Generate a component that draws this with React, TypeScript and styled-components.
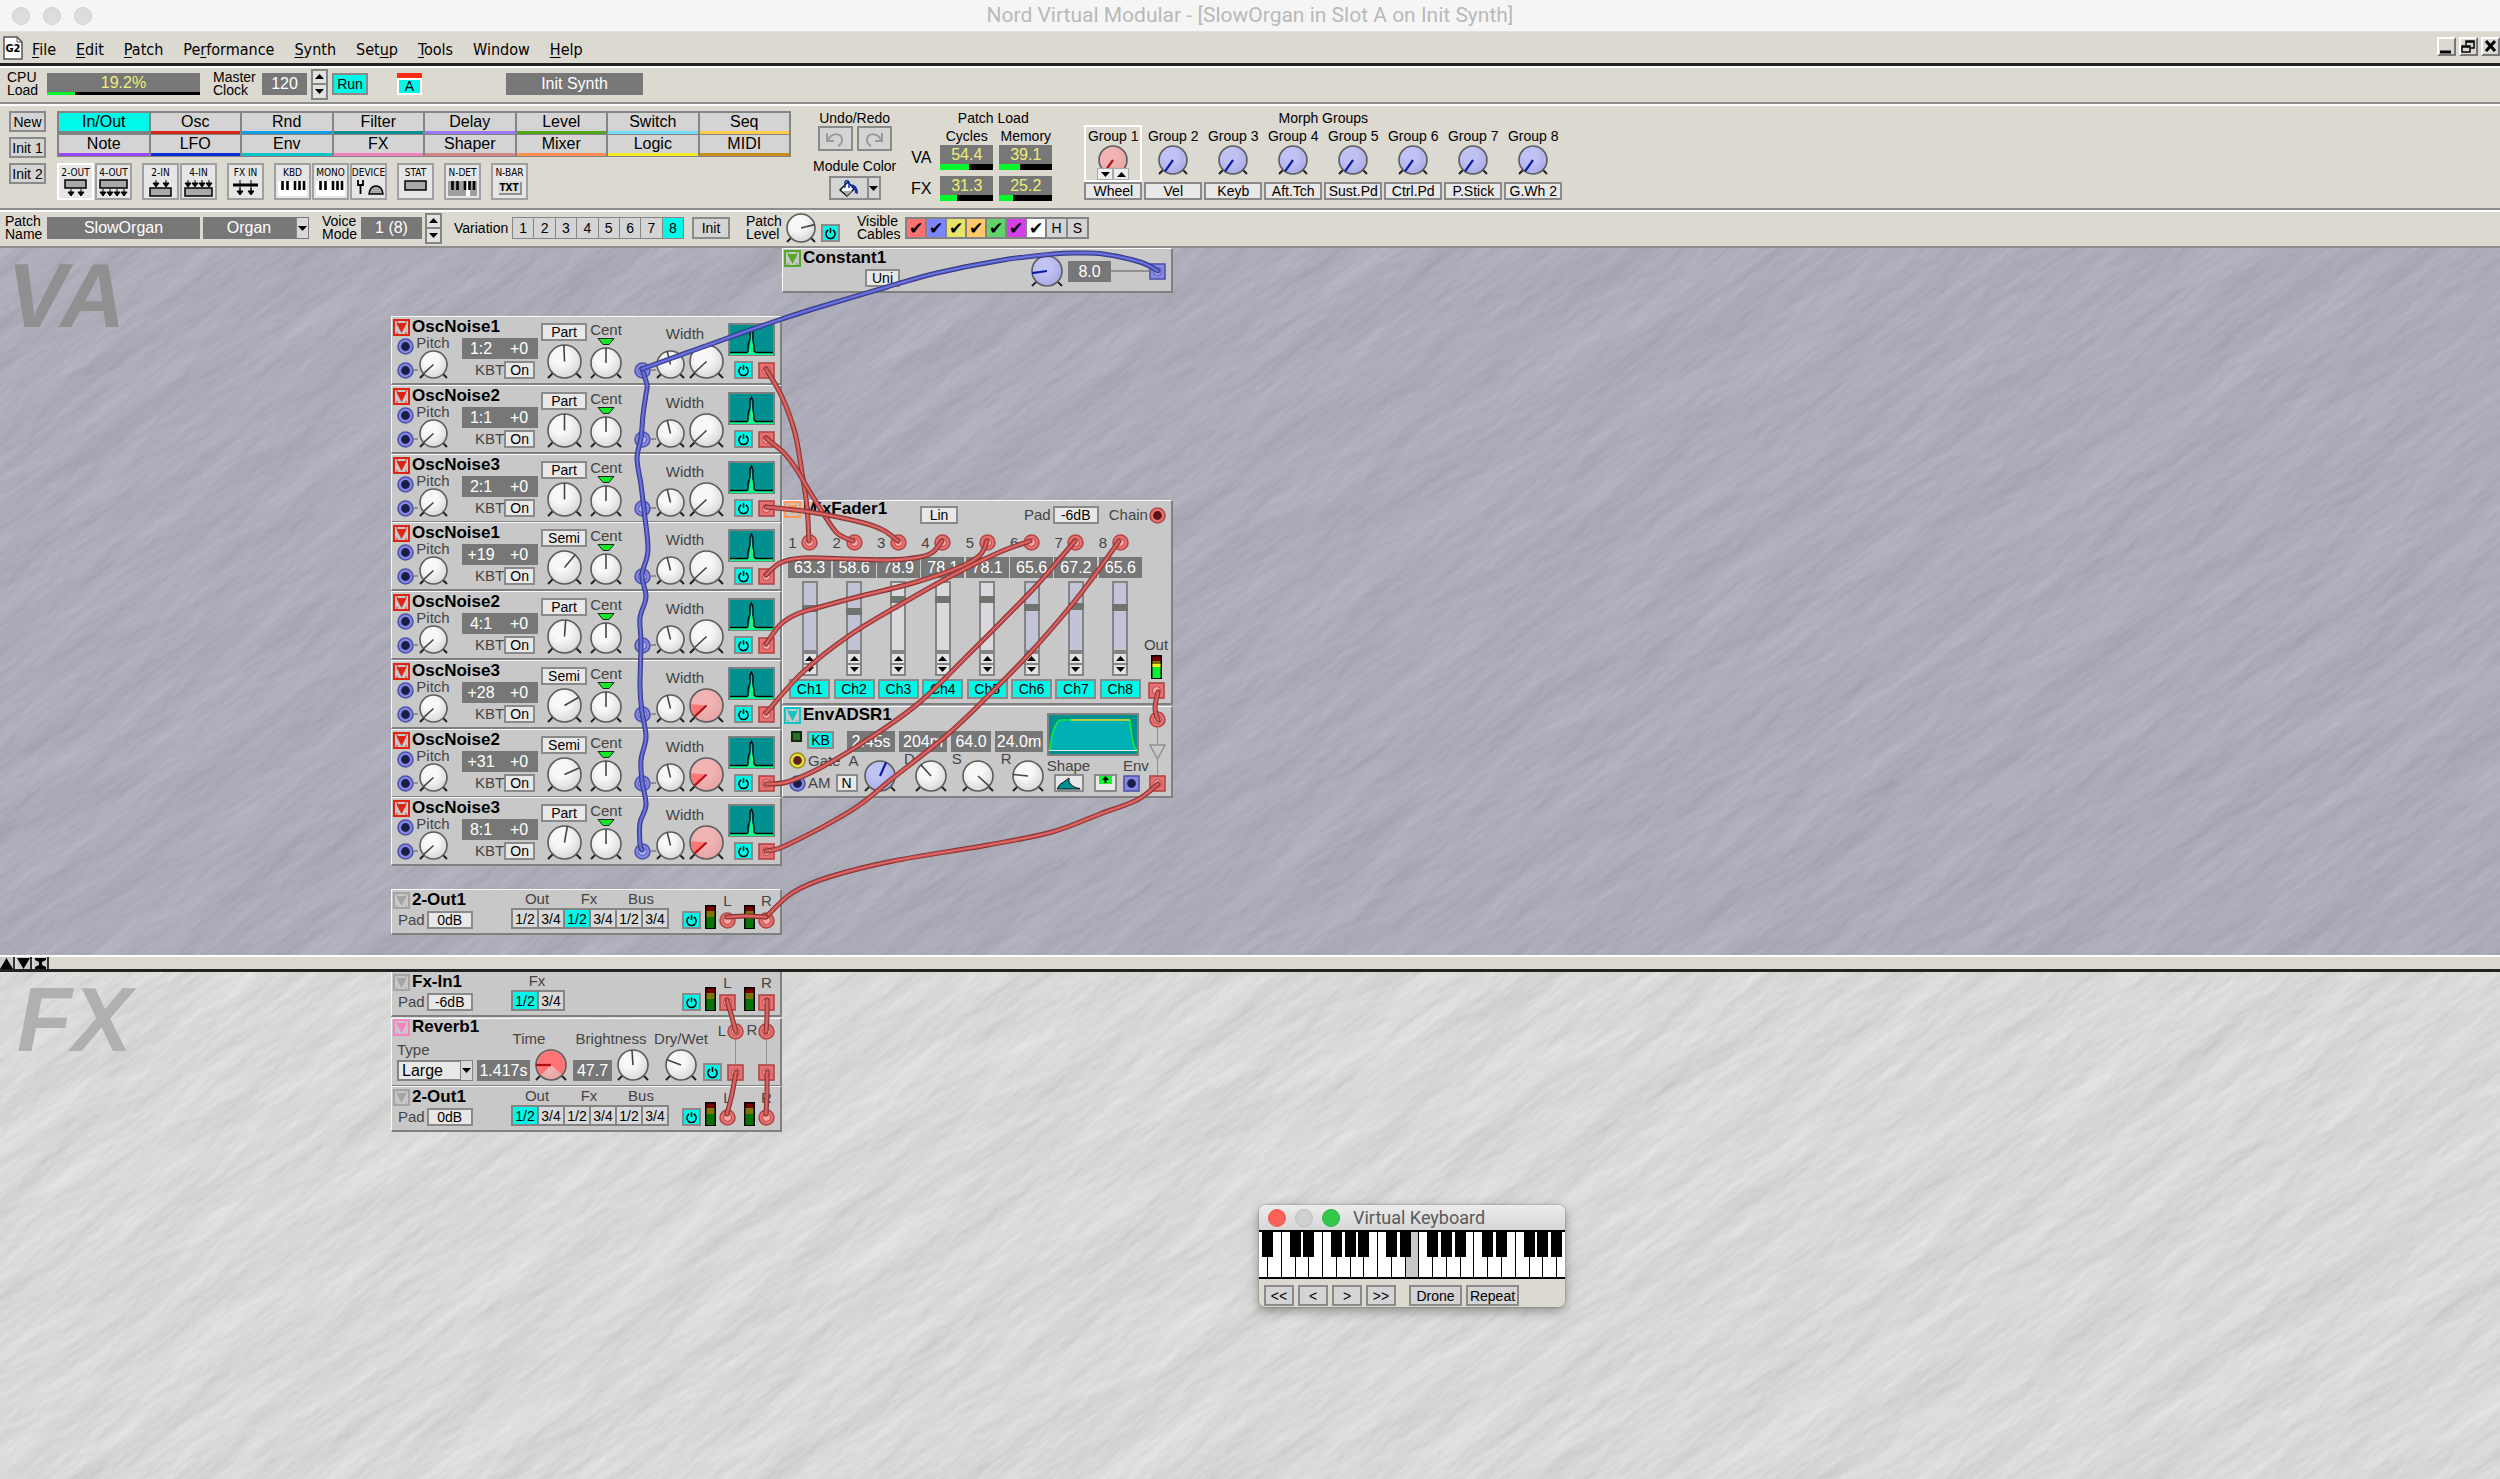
import React from "react";
import styled, { createGlobalStyle, css } from "styled-components";

const sans = `"Liberation Sans", Arial, sans-serif`;
const ui = `"DejaVu Sans Condensed", "DejaVu Sans", Tahoma, sans-serif`;
const mac = `Roboto, Inter, sans-serif`;
const C = {
  face: "#dcd9d1",
  btn: "#d4d4d4",
  line: "#848484",
  field: "#777777",
  cyan: "#00f8e8",
  module: "#c8c8c8",
  lime: "#eef07a",
};

const Global = createGlobalStyle`
  * { box-sizing: border-box; }
  body { margin: 0; font-family: ${sans}; font-size: 15px; color: #000; background: ${C.face}; }
  button, input, select { font: inherit; color: inherit; margin: 0; padding: 0; border-radius: 0; }
  svg { display: block; flex: none; }
`;

/* ---------- window chrome ---------- */

const AppWindow = styled.div`
  display: flex;
  flex-direction: column;
  min-height: 100vh;
  background: ${C.face};
  overflow: hidden;
`;
const TitleBar = styled.header`
  position: relative;
  display: flex;
  align-items: center;
  justify-content: center;
  height: 32px;
  background: #f5f5f5;
  border-bottom: 1px solid #e0e0e0;
`;
const AppTitle = styled.h1`
  margin: 0;
  font: 400 21px/31px ${mac};
  color: #b9b9b9;
`;
const Lights = styled.div<{ $gap: number; $left: number }>`
  position: absolute;
  left: ${(p) => p.$left}px;
  display: flex;
  gap: ${(p) => p.$gap}px;
`;
const Light = styled.button<{ $c: string; $edge: string }>`
  width: 18px;
  height: 18px;
  border: 1px solid ${(p) => p.$edge};
  border-radius: 50%;
  background: ${(p) => p.$c};
`;
const MenuBar = styled.nav`
  display: flex;
  align-items: center;
  height: 34px;
  padding-left: 3px;
  border-bottom: 3px solid #222;
  font: 16px/20px ${ui};
`;
const MenuItem = styled.button`
  margin-left: 20px;
  padding-top: 5px;
  border: 0;
  background: none;
  u { text-underline-offset: 2px; }
  &:first-of-type { margin-left: 9px; }
`;
const WinControls = styled.div`
  display: flex;
  gap: 3px;
  margin-left: auto;
  padding-bottom: 2px;
`;
const WinButton = styled.button`
  width: 19px;
  height: 19px;
  border: 2px solid;
  border-color: #fff #777 #777 #fff;
  background: ${C.face};
`;

/* ---------- toolbars ---------- */

const Toolbar = styled.div<{ $h: number }>`
  display: flex;
  align-items: center;
  height: ${(p) => p.$h}px;
  padding-bottom: 2px;
  border-top: 2px solid #fbfbfb;
  border-bottom: 2px solid #8c8c8c;
`;
const PaletteBar = styled(Toolbar)`
  align-items: flex-start;
  padding: 5px 0 0 9px;
`;
const StackLabel = styled.div<{ $w: number; $ml?: number }>`
  width: ${(p) => p.$w}px;
  margin-left: ${(p) => p.$ml ?? 0}px;
  font-size: 14px;
  line-height: 13px;
`;
const fieldCss = css`
  border: 0;
  background: ${C.field};
  color: #fff;
  text-align: center;
  font-size: 16px;
  line-height: 22px;
`;
const Field = styled.output<{ $w: number; $ml?: number }>`
  ${fieldCss}
  display: block;
  width: ${(p) => p.$w}px;
  height: 22px;
  margin-left: ${(p) => p.$ml ?? 0}px;
  white-space: pre;
`;
const TextField = styled.input<{ $w: number; $ml?: number }>`
  ${fieldCss}
  width: ${(p) => p.$w}px;
  height: 22px;
  margin-left: ${(p) => p.$ml ?? 0}px;
`;
const Meter = styled.div<{ $w: number; $h: number; $bar: number }>`
  display: flex;
  flex-direction: column;
  width: ${(p) => p.$w}px;
  height: ${(p) => p.$h}px;
  background: ${C.field};
  color: ${C.lime};
  text-align: center;
  font-size: 16px;
  line-height: ${(p) => p.$h - p.$bar}px;
`;
const MeterBar = styled.div<{ $h: number }>`
  height: ${(p) => p.$h}px;
  background: #000;
`;
const MeterFill = styled.div`
  height: 100%;
  background: #00f82c;
`;
const Btn = styled.button<{ $w: number; $h?: number; $ml?: number; $on?: boolean; $light?: boolean }>`
  flex: none;
  display: flex;
  align-items: center;
  justify-content: center;
  width: ${(p) => p.$w}px;
  height: ${(p) => p.$h ?? 22}px;
  margin-left: ${(p) => p.$ml ?? 0}px;
  border: 2px solid #8a8a8a;
  background: ${(p) => (p.$on ? C.cyan : p.$light ? "#e8e8e8" : C.btn)};
  font-size: 14px;
  line-height: 14px;
`;
const SpinBox = styled.div<{ $ml?: number; $h: number; $w: number }>`
  display: grid;
  grid-template-rows: 1fr 1fr;
  width: ${(p) => p.$w}px;
  height: ${(p) => p.$h}px;
  margin-left: ${(p) => p.$ml ?? 0}px;
  border: 1px solid ${C.line};
`;
const SpinKey = styled.button`
  display: flex;
  align-items: center;
  justify-content: center;
  border: 1px solid ${C.line};
  background: #e2e2e2;
`;
const Slot = styled.div`
  width: 25px;
  height: 22px;
  margin-left: 29px;
  border-top: 5px solid #ff2a12;
`;
const SlotKey = styled.button`
  display: block;
  width: 100%;
  height: 17px;
  border: 2px solid #fff;
  background: ${C.cyan};
  font-size: 14px;
  line-height: 13px;
`;
const SideKeys = styled.div`
  display: grid;
  gap: 5px;
  margin-right: 11px;
`;
const Palette = styled.div`
  width: 734px;
`;
const Tabs = styled.div`
  display: grid;
  grid-template-columns: repeat(8, 1fr);
  border: 1px solid ${C.line};
`;
const Tab = styled.button<{ $c: string; $on?: boolean }>`
  height: 22px;
  border: 1px solid ${C.line};
  border-bottom: 0;
  background: linear-gradient(to top, ${(p) => p.$c} 3px, ${(p) => (p.$on ? C.cyan : C.btn)} 3px);
  font-size: 16px;
  line-height: 16px;
  padding-bottom: 4px;
`;
const ModuleKeys = styled.div`
  display: flex;
  gap: 10px;
  margin-top: 6px;
`;
const KeyGroup = styled.div`
  display: flex;
  gap: 1px;
`;
const ModuleKey = styled.button<{ $on?: boolean }>`
  display: flex;
  flex-direction: column;
  align-items: center;
  justify-content: space-between;
  width: 37px;
  height: 37px;
  padding: 2px 0 1px;
  overflow: hidden;
  border: 2px solid ${(p) => (p.$on ? "#fff" : "#a0a0a0")};
  background: #e6e6e6;
  font: 10px/12px ${ui};
  white-space: nowrap;
`;
const ToolColumn = styled.div<{ $ml: number }>`
  display: flex;
  flex-direction: column;
  align-items: center;
  margin-left: ${(p) => p.$ml}px;
  font-size: 14px;
  line-height: 14px;
`;
const UndoRow = styled.div`
  display: flex;
  gap: 4px;
  margin: 1px 0 8px;
`;
const ColorRow = styled.div`
  display: flex;
  margin-top: 3px;
`;
const LoadGrid = styled.div`
  display: grid;
  grid-template-columns: 26px 53px 53px;
  column-gap: 6px;
  row-gap: 6px;
  align-items: center;
  justify-items: center;
  margin-top: 4px;
  font-size: 16px;
`;
const LoadHead = styled.span`
  font-size: 14px;
  margin-bottom: -4px;
`;
const Morphs = styled.div`
  display: grid;
  grid-template-columns: repeat(8, 58px);
  column-gap: 2px;
`;
const Morph = styled.div<{ $on?: boolean }>`
  display: flex;
  flex-direction: column;
  align-items: center;
  gap: 2px;
  height: 57px;
  padding-top: 2px;
  border: 2px solid ${(p) => (p.$on ? "#fff" : "transparent")};
  white-space: nowrap;
`;
const MorphArrows = styled.div`
  position: relative;
  z-index: 1;
  display: flex;
  margin-top: -9px;
`;

/* ---------- knobs, jacks, small parts ---------- */

const KnobBox = styled.label`
  position: relative;
  display: block;
  flex: none;
`;
const KnobRange = styled.input`
  position: absolute;
  inset: 0;
  width: 100%;
  height: 100%;
  opacity: 0;
  cursor: pointer;
`;

type KnobProps = { size: number; angle?: number; tone?: "white" | "blue" | "red"; arc?: [number, number]; label: string };
function Knob({ size, angle = 0, tone = "white", arc, label }: KnobProps) {
  const c = size / 2;
  const r = c - 1;
  const at = (a: number, d: number) => [c + d * Math.sin((a * Math.PI) / 180), c - d * Math.cos((a * Math.PI) / 180)];
  const [x, y] = at(angle, r);
  const id = `knob-${tone}`;
  let sector = "";
  if (arc) {
    const [ax, ay] = at(arc[0], r - 1);
    const [bx, by] = at(arc[1], r - 1);
    sector = `M${c} ${c}L${ax} ${ay}A${r - 1} ${r - 1} 0 ${arc[1] - arc[0] > 180 ? 1 : 0} 1 ${bx} ${by}Z`;
  }
  const stops = { white: ["#f8f8f8", "#d8d8d8"], blue: ["#c0c2f4", "#a8aae4"], red: ["#f0b4b4", "#e8a4a4"] }[tone];
  const hand = { white: "#444", blue: "#0a1ca8", red: "#b01010" }[tone];
  return (
    <KnobBox>
      <svg width={size} height={size}>
        <defs>
          <radialGradient id={id} cx="40%" cy="35%" r="65%">
            <stop offset="40%" stopColor={stops[0]} />
            <stop offset="100%" stopColor={stops[1]} />
          </radialGradient>
        </defs>
        <path d={`M${size * 0.2} ${size * 0.8}L1 ${size - 1}M${size * 0.8} ${size * 0.8}L${size - 1} ${size - 1}`} stroke="#222" strokeWidth="2" />
        <circle cx={c} cy={c} r={r} fill={`url(#${id})`} stroke="#5c5c5c" strokeWidth="1.6" />
        {arc && <path d={sector} fill="#ff7474" />}
        <line x1={c} y1={c} x2={x} y2={y} stroke={hand} strokeWidth={tone === "white" ? 1.6 : 2.2} />
      </svg>
      <KnobRange type="range" min={-145} max={145} defaultValue={angle} aria-label={label} />
    </KnobBox>
  );
}

const jackTone = {
  blue: { fill: "#8488e4", edge: "#5054a8", hole: "#1c1c48", hi: "#aeb2ff" },
  red: { fill: "#e87070", edge: "#b04848", hole: "#581414", hi: "#ffa4a4" },
  yellow: { fill: "#e8e040", edge: "#98901c", hole: "#602020", hi: "#fff" },
};
type JackProps = { tone: keyof typeof jackTone; out?: boolean; used?: boolean };
function Jack({ tone, out, used }: JackProps) {
  const t = jackTone[tone];
  return (
    <svg width="17" height="17" aria-hidden="true">
      {out ? (
        <rect x="1" y="1" width="15" height="15" fill={t.fill} stroke={t.edge} strokeWidth="1.6" />
      ) : (
        <circle cx="8.5" cy="8.5" r="7.5" fill={t.fill} stroke={t.edge} strokeWidth="1.6" />
      )}
      {used ? (
        <circle cx="8.5" cy="8.5" r="4" fill={t.hi} stroke={t.edge} />
      ) : (
        <circle cx="8.5" cy="8.5" r="4.4" fill={t.hole} />
      )}
    </svg>
  );
}

function Arrow({ dir }: { dir: "up" | "down" }) {
  return (
    <svg width="9" height="5" aria-hidden="true">
      <path d={dir === "up" ? "M0 5L4.500 0L9 5Z" : "M0 0L4.500 5L9 0Z"} />
    </svg>
  );
}
function Spin({ ml, h = 31, w = 17, label }: { ml?: number; h?: number; w?: number; label: string }) {
  return (
    <SpinBox $ml={ml} $h={h} $w={w}>
      <SpinKey aria-label={`${label} up`}><Arrow dir="up" /></SpinKey>
      <SpinKey aria-label={`${label} down`}><Arrow dir="down" /></SpinKey>
    </SpinBox>
  );
}

function Power({ ml }: { ml?: number }) {
  return (
    <Btn $w={19} $h={18} $on $ml={ml} aria-label="On/off">
      <svg width="13" height="13" fill="none" stroke="#000" strokeWidth="1.5">
        <path d="M4.200 3A4.600 4.600 0 1 0 8.800 3M6.500 1V6" />
      </svg>
    </Btn>
  );
}

function TypeBadge({ c }: { c: string }) {
  return (
    <svg width="17" height="17" aria-hidden="true">
      <rect x="1" y="1" width="15" height="15" fill="none" stroke={c} strokeWidth="2" />
      <path d="M4 4H13V5.500L8.500 14L4 5.500Z" fill={c} />
      <path d="M3 3H5M12 3H14M3 14H5M12 14H14" stroke={c} />
    </svg>
  );
}

function Level({ lit }: { lit?: boolean }) {
  return (
    <svg width="11" height="24" aria-hidden="true">
      <rect width="11" height="24" fill="#000" />
      <rect x="1.500" y="1.500" width="8" height="5" fill="#780000" />
      <rect x="1.500" y="6" width="8" height="6" fill="#7c7408" />
      {lit && <rect x="1.500" y="9" width="8" height="3" fill="#f0f020" />}
      <rect x="1.500" y="12" width="8" height="11" fill={lit ? "#08f030" : "#087408"} />
    </svg>
  );
}

/* ---------- patch panes ---------- */

const Pane = styled.section<{ $grow: number; $bg: string }>`
  position: relative;
  flex: ${(p) => p.$grow} 1 0;
  overflow: hidden;
  background: ${(p) => p.$bg};
`;
const Stone = styled.svg`
  position: absolute;
  left: -10%;
  top: -1000px;
  width: 120%;
  height: 2700px;
  transform: rotate(-36deg);
`;
const PaneName = styled.div<{ $c: string; $x: number }>`
  position: absolute;
  left: ${(p) => p.$x}px;
  top: 0;
  padding-right: 8px;
  font: italic 700 90px/96px ${sans};
  color: ${(p) => p.$c};
`;
const Cables = styled.svg`
  position: absolute;
  left: 0;
  top: 0;
  width: 1200px;
  height: 707px;
  pointer-events: none;
`;
const Splitter = styled.div`
  display: flex;
  gap: 2px;
  height: 17px;
  border-top: 2px solid #fff;
  border-bottom: 3px solid #222;
`;
const SplitKey = styled.button`
  display: flex;
  align-items: center;
  justify-content: center;
  width: 15px;
  border: 0;
  border-right: 2px solid #333;
  background: #ccc;
`;

function StoneTexture({ id, tint, seed }: { id: string; tint: string; seed: number }) {
  return (
    <Stone aria-hidden="true">
      <filter id={id} x="0" y="0" width="100%" height="100%" colorInterpolationFilters="sRGB">
        <feTurbulence type="fractalNoise" baseFrequency="0.006 0.020" numOctaves="5" seed={seed} result="n" />
        <feDiffuseLighting in="n" surfaceScale="1.300" diffuseConstant="1" lightingColor={tint}>
          <feDistantLight azimuth="270" elevation="60" />
        </feDiffuseLighting>
      </filter>
      <rect width="100%" height="100%" filter={`url(#${id})`} />
    </Stone>
  );
}

type Pt = [number, number];
const curve = (pts: Pt[]) => {
  let d = `M${pts[0]}`;
  for (let i = 0; i < pts.length - 1; i++) {
    const a = pts[Math.max(i - 1, 0)];
    const b = pts[i];
    const c = pts[i + 1];
    const e = pts[Math.min(i + 2, pts.length - 1)];
    d += `C${b[0] + (c[0] - a[0]) / 6} ${b[1] + (c[1] - a[1]) / 6} ${c[0] - (e[0] - b[0]) / 6} ${c[1] - (e[1] - b[1]) / 6} ${c[0]} ${c[1]}`;
  }
  return d;
};
const cableTone = {
  red: ["#7c3434", "#cc5050", "#e47474"],
  blue: ["#34387c", "#565cc8", "#7a80e8"],
};
function Cable({ tone, pts }: { tone: "red" | "blue"; pts: Pt[] }) {
  const d = curve(pts);
  const t = cableTone[tone];
  return (
    <g fill="none" strokeLinecap="round" strokeLinejoin="round">
      <path d={d} stroke={t[0]} strokeWidth="5" />
      <path d={d} stroke={t[1]} strokeWidth="3.200" />
      <path d={d} stroke={t[2]} strokeWidth="1" />
    </g>
  );
}

/* ---------- modules ---------- */

const Module = styled.article<{ $x: number; $y: number; $h: number }>`
  position: absolute;
  left: ${(p) => p.$x}px;
  top: ${(p) => p.$y}px;
  display: flex;
  align-items: flex-end;
  width: 391px;
  height: ${(p) => p.$h}px;
  padding: 0 0 4px 1px;
  border: solid;
  border-width: 1px 2px 2px 1px;
  border-color: #fafafa #808080 #808080 #fafafa;
  background: ${C.module};
  color: #444;
  line-height: 14px;
`;
const StackModule = styled(Module)`
  flex-direction: column;
  align-items: stretch;
`;
const Col = styled.div<{ $w?: number; $gap?: number; $ml?: number; $align?: string; $tall?: boolean; $justify?: string }>`
  display: flex;
  flex-direction: column;
  flex: none;
  width: ${(p) => (p.$w ? `${p.$w}px` : "auto")};
  gap: ${(p) => p.$gap ?? 0}px;
  margin-left: ${(p) => p.$ml ?? 0}px;
  align-items: ${(p) => p.$align ?? "center"};
  justify-content: ${(p) => p.$justify ?? "flex-start"};
  ${(p) => p.$tall && "align-self: stretch;"}
`;
const Row = styled.div<{ $gap?: number; $ml?: number; $align?: string; $justify?: string }>`
  display: flex;
  gap: ${(p) => p.$gap ?? 0}px;
  margin-left: ${(p) => p.$ml ?? 0}px;
  align-items: ${(p) => p.$align ?? "center"};
  justify-content: ${(p) => p.$justify ?? "flex-start"};
`;
const Name = styled.h2`
  display: flex;
  align-items: flex-start;
  align-self: flex-start;
  gap: 2px;
  height: 17px;
  margin: 0;
  font-size: 17px;
  line-height: 16px;
  color: #000;
  white-space: nowrap;
`;
const Caption = styled.span<{ $ml?: number; $top?: boolean }>`
  margin-left: ${(p) => p.$ml ?? 0}px;
  white-space: nowrap;
  ${(p) => p.$top && "align-self: flex-start;"}
`;
const SmallBtn = styled(Btn)`
  color: #000;
  height: ${(p) => p.$h ?? 18}px;
  background: ${(p) => (p.$on ? C.cyan : "#e8e8e8")};
`;
const Value = styled(Field)`
  height: 21px;
  line-height: 21px;
`;
const Pair = styled(Value)`
  display: grid;
  grid-template-columns: 1fr 1fr;
`;
const Wire = styled.i<{ $w?: number; $up?: number }>`
  flex: ${(p) => (p.$w ? "none" : 1)};
  width: ${(p) => p.$w ?? 1}px;
  ${(p) => p.$w && "height: 2px;"}
  margin-bottom: ${(p) => p.$up ?? 0}px;
  background: #909090;
`;
const Segments = styled.div`
  display: flex;
  height: 21px;
  border: 1px solid ${C.line};
`;
const Segment = styled.button<{ $on?: boolean }>`
  width: 26px;
  border: 1px solid ${C.line};
  background: ${(p) => (p.$on ? C.cyan : "#d8d8d8")};
  color: #000;
  font-size: 14px;
  line-height: 14px;
  white-space: nowrap;
`;

function Title({ c, children }: { c: string; children: React.ReactNode }) {
  return <Name><TypeBadge c={c} />{children}</Name>;
}

type Osc = { name: string; ratio: string; mode: string; tune: number; hot?: boolean };
const oscs: Osc[] = [
  { name: "OscNoise1", ratio: "1:2", mode: "Part", tune: -2 },
  { name: "OscNoise2", ratio: "1:1", mode: "Part", tune: 0 },
  { name: "OscNoise3", ratio: "2:1", mode: "Part", tune: 0 },
  { name: "OscNoise1", ratio: "+19", mode: "Semi", tune: 40 },
  { name: "OscNoise2", ratio: "4:1", mode: "Part", tune: 4 },
  { name: "OscNoise3", ratio: "+28", mode: "Semi", tune: 60, hot: true },
  { name: "OscNoise2", ratio: "+31", mode: "Semi", tune: 66, hot: true },
  { name: "OscNoise3", ratio: "8:1", mode: "Part", tune: 10, hot: true },
];

function OscNoise({ osc, y }: { osc: Osc; y: number }) {
  return (
    <Module $x={391} $y={y} $h={69}>
      <Col $w={146} $align="stretch">
        <Title c="#e02414">{osc.name}</Title>
        <Row $ml={4} $align="flex-end">
          <Col $gap={7}>
            <Jack tone="blue" />
            <Jack tone="blue" />
          </Col>
          <Wire $w={4} $up={8} />
          <Col $w={30}>
            <Caption>Pitch</Caption>
            <Knob size={29} angle={-132} label="Pitch modulation" />
          </Col>
          <Col $ml={14} $align="flex-start" $gap={2}>
            <Pair $w={76}><span>{osc.ratio}</span><span>+0</span></Pair>
            <Row $ml={13}>
              <Caption>KBT</Caption>
              <SmallBtn $w={31}>On</SmallBtn>
            </Row>
          </Col>
        </Row>
      </Col>
      <Col $gap={3} $ml={2}>
        <SmallBtn $w={46}>{osc.mode}</SmallBtn>
        <Knob size={35} angle={osc.tune} label="Tune" />
      </Col>
      <Col $w={34} $gap={1} $ml={2}>
        <Caption>Cent</Caption>
        <svg width="18" height="8"><path d="M1 .5H17L12 6.500H6Z" fill="#10e828" stroke="#222" /></svg>
        <Knob size={32} angle={0} label="Cent" />
      </Col>
      <Col $ml={11} $gap={3}>
        <Caption $ml={12}>Width</Caption>
        <Row $align="flex-end">
          <Jack tone="blue" used />
          <Wire $w={5} $up={8} />
          <Knob size={29} angle={-14} label="Width modulation" />
          <Row $ml={4}>
            <Knob size={35} angle={-133} tone={osc.hot ? "red" : "white"} arc={osc.hot ? [-133, -85] : undefined} label="Width" />
          </Row>
        </Row>
      </Col>
      <Col $ml={4} $align="flex-end" $gap={5}>
        <svg width="47" height="33" aria-hidden="true">
          <rect x="1" y="1" width="45" height="31" fill="#009090" stroke="#808080" strokeWidth="2" />
          <path d="M2 30H20L22 22L23 7L25 22L27 30H45V32H2Z" fill="#10f890" />
          <path d="M2 29.500H19L20 28V22L22 16V8L23.500 5L25 9V17L26 23V28L28 29.500H45" fill="none" stroke="#000" strokeWidth="1.300" />
        </svg>
        <Row $gap={5}>
          <Power />
          <Jack tone="red" out used />
        </Row>
      </Col>
    </Module>
  );
}

function Constant() {
  return (
    <Module $x={782} $y={0} $h={45}>
      <Col $w={116} $align="flex-end" $gap={2}>
        <Title c="#58a828">Constant1</Title>
        <SmallBtn $w={35}>Uni</SmallBtn>
      </Col>
      <Row $ml={131}>
        <Knob size={32} angle={-98} tone="blue" label="Constant" />
        <Value $w={43} $ml={5}>8.0</Value>
        <Wire $w={38} />
        <Jack tone="blue" out used />
      </Row>
    </Module>
  );
}

const MixHead = styled.div`
  display: flex;
  align-items: center;
  height: 28px;
`;
const MixBody = styled.div`
  flex: 1;
  display: flex;
  justify-content: space-between;
  align-items: flex-end;
  padding: 0 3px 0 4px;
`;
const Channels = styled.div`
  display: grid;
  grid-template-columns: repeat(8, 1fr);
  width: 355px;
`;
const Channel = styled.div`
  display: flex;
  flex-direction: column;
  align-items: center;
  min-width: 0;
  padding-right: 1px;
`;
const ChannelIn = styled.div`
  display: grid;
  grid-template-columns: 13px 17px 13px;
  align-items: center;
  margin-bottom: 6px;
`;
const Fader = styled.input<{ $hot: boolean }>`
  appearance: none;
  writing-mode: vertical-lr;
  direction: rtl;
  width: 16px;
  height: 71px;
  margin-top: 3px;
  border: 2px solid ${C.line};
  background: ${(p) => (p.$hot ? "#dad8dc" : "#c2c3d4")};
  &::-webkit-slider-thumb {
    appearance: none;
    width: 16px;
    height: 7px;
    background: #70746f;
  }
`;
const ChBtn = styled(SmallBtn)`
  margin-top: 3px;
`;
const levels = [63.3, 58.6, 78.9, 78.1, 78.1, 65.6, 67.2, 65.6];

function MixFader() {
  return (
    <StackModule $x={782} $y={252} $h={205}>
      <MixHead>
        <Col $w={136} $tall $align="flex-start"><Title c="#ff9858">MixFader1</Title></Col>
        <SmallBtn $w={38}>Lin</SmallBtn>
        <Caption $ml={66}>Pad</Caption>
        <SmallBtn $w={46} $ml={2}>-6dB</SmallBtn>
        <Row $gap={1} $ml={10}><Caption>Chain</Caption><Jack tone="red" /></Row>
      </MixHead>
      <MixBody>
        <Channels>
          {levels.map((v, i) => (
            <Channel key={i}>
              <ChannelIn>{i + 1}<Jack tone="red" used /></ChannelIn>
              <Value $w={43}>{v.toFixed(1)}</Value>
              <Fader type="range" min={0} max={100} step={0.1} defaultValue={v} $hot={v > 70} aria-label={`Channel ${i + 1} level`} />
              <Spin h={24} w={16} label={`Channel ${i + 1}`} />
              <ChBtn $w={41} $h={20} $on>Ch{i + 1}</ChBtn>
            </Channel>
          ))}
        </Channels>
        <Col $gap={3} $w={24}>
          <Caption>Out</Caption>
          <Level lit />
          <Jack tone="red" out used />
        </Col>
      </MixBody>
    </StackModule>
  );
}

const EnvValues = styled(Row)`
  margin: 7px 0 0 7px;
`;
const EnvKnobs = styled(Row)`
  margin: auto 0 0 5px;
`;
const ChainIn = styled.div`
  padding-top: 4px;
`;

function EnvADSR() {
  return (
    <Module $x={782} $y={458} $h={92}>
      <Col $w={262} $align="stretch" $tall>
        <Title c="#10c4c4">EnvADSR1</Title>
        <EnvValues $align="flex-start">
          <svg width="11" height="11"><rect x="1" y="1" width="9" height="9" fill="#287028" stroke="#102810" strokeWidth="2" /></svg>
          <SmallBtn $w={27} $ml={5} $on>KB</SmallBtn>
          <Value $w={48} $ml={13}>2.45s</Value>
          <Value $w={48} $ml={4}>204m</Value>
          <Value $w={40} $ml={4}>64.0</Value>
          <Value $w={48} $ml={4}>24.0m</Value>
        </EnvValues>
        <EnvKnobs $align="flex-end">
          <Col $w={70} $gap={5} $align="stretch">
            <Row $gap={2}><Jack tone="yellow" /><Caption>Gate</Caption><Caption $ml={6}>A</Caption></Row>
            <Row $gap={2}><Jack tone="blue" /><Caption>AM</Caption><SmallBtn $w={22} $ml={3}>N</SmallBtn></Row>
          </Col>
          <Row $ml={5}><Knob size={32} angle={24} tone="blue" label="Attack" /></Row>
          <Caption $ml={8} $top>D</Caption>
          <Knob size={32} angle={-42} label="Decay" />
          <Caption $ml={5} $top>S</Caption>
          <Knob size={32} angle={132} label="Sustain" />
          <Caption $ml={7} $top>R</Caption>
          <Knob size={32} angle={-84} label="Release" />
        </EnvKnobs>
      </Col>
      <Col $w={92} $gap={3} $ml={1} $align="stretch">
        <svg width="92" height="43" aria-hidden="true">
          <rect x="1" y="1" width="90" height="41" fill="#009090" stroke="#808080" strokeWidth="2" />
          <path d="M3 37Q6 9 14 8H84Q85 34 90 37Z" fill="#00b0b4" />
          <path d="M3 37Q6 9 14 7H24M83 7Q85 34 90 37" fill="none" stroke="#10f040" strokeWidth="1.600" />
          <path d="M24 7H83" stroke="#e0e820" strokeWidth="1.600" />
          <path d="M2 37.500H90" stroke="#d8f0f0" />
        </svg>
        <Row $align="flex-end">
          <Col $w={43} $gap={1}>
            <Caption>Shape</Caption>
            <SmallBtn $w={30} aria-label="Shape">
              <svg width="26" height="14"><path d="M1 13Q4 7 7 6.500L13 2V6Q17 12 24 12.500V13Z" fill="#009090" stroke="#111" /></svg>
            </SmallBtn>
          </Col>
          <SmallBtn $w={23} $ml={4} aria-label="Output polarity">
            <svg width="19" height="14"><rect x="3" width="13" height="8" fill="#10f828" /><path d="M9.500 0L13 4H10.500V7H8.500V4H6Z" /></svg>
          </SmallBtn>
          <Col $ml={6} $gap={2} $align="flex-start">
            <Caption>Env</Caption>
            <Jack tone="blue" out />
          </Col>
        </Row>
      </Col>
      <Col $ml={10} $tall $w={17}>
        <ChainIn><Jack tone="red" used /></ChainIn>
        <Wire />
        <svg width="17" height="16"><path d="M1 1H16L8.500 15Z" fill="none" stroke="#909090" strokeWidth="1.500" /></svg>
        <Wire />
        <Jack tone="red" out used />
      </Col>
    </Module>
  );
}

const GroupName = styled.span`
  width: 52px;
  text-align: center;
`;
type IoProps = { name: string; y: number; pad: string; groups: string[]; on: number; out?: boolean };
function InOut({ name, y, pad, groups, on, out }: IoProps) {
  return (
    <Module $x={391} $y={y} $h={46}>
      <Col $w={118} $align="stretch" $gap={2}>
        <Title c="#a4a4a4">{name}</Title>
        <Row $ml={5} $gap={2}>
          <Caption>Pad</Caption>
          <SmallBtn $w={46}>{pad}</SmallBtn>
        </Row>
      </Col>
      <Col $w={158} $align="flex-start" $gap={2}>
        <Row>{groups.map((g) => <GroupName key={g}>{g}</GroupName>)}</Row>
        <Segments>
          {groups.flatMap((g, i) => [
            <Segment key={`${g}a`} $on={on === i * 2}>1/2</Segment>,
            <Segment key={`${g}b`} $on={on === i * 2 + 1}>3/4</Segment>,
          ])}
        </Segments>
      </Col>
      <Row $ml={13} $align="flex-end">
        <Power />
        <Row $ml={4}><Level /></Row>
        <Col $ml={3} $gap={4}><Caption>L</Caption><Jack tone="red" out={out} used /></Col>
        <Row $ml={8}><Level /></Row>
        <Col $ml={3} $gap={4}><Caption>R</Caption><Jack tone="red" out={out} used /></Col>
      </Row>
    </Module>
  );
}

const SelectBox = styled.label<{ $ml?: number }>`
  position: relative;
  display: block;
  margin-left: ${(p) => p.$ml ?? 0}px;
`;
const LightSelect = styled.select`
  appearance: none;
  display: block;
  width: 76px;
  height: 21px;
  padding-left: 3px;
  border: 2px solid ${C.line};
  background: #e8e8e8;
  color: #000;
  font-size: 16px;
  line-height: 17px;
`;
const DarkSelect = styled.select`
  appearance: none;
  ${fieldCss}
  display: block;
  width: 106px;
  height: 22px;
  padding-right: 14px;
`;
const DropMark = styled.span`
  position: absolute;
  right: 1px;
  top: 1px;
  bottom: 1px;
  display: flex;
  align-items: center;
  justify-content: center;
  width: 12px;
  border-left: 1px solid ${C.line};
  background: #d8d8d8;
  pointer-events: none;
`;
const ReverbIn = styled.div`
  padding-top: 4px;
`;
const WetCol = styled.div`
  display: flex;
  flex-direction: column;
  align-self: stretch;
  justify-content: space-between;
  width: 23px;
  margin-left: -8px;
  padding-top: 5px;
  & > span { align-self: flex-end; }
`;

function Reverb() {
  return (
    <Module $x={391} $y={46} $h={69}>
      <Col $w={80} $align="stretch" $tall $justify="space-between">
        <Title c="#f484c4">Reverb1</Title>
        <Col $ml={4} $align="flex-start" $gap={3}>
          <Caption>Type</Caption>
          <SelectBox>
            <LightSelect aria-label="Reverb type" defaultValue="Large">
              <option>Small</option><option>Medium</option><option>Large</option><option>Hall</option>
            </LightSelect>
            <DropMark><Arrow dir="down" /></DropMark>
          </SelectBox>
        </Col>
      </Col>
      <Col $ml={4} $gap={3}>
        <Caption $ml={14}>Time</Caption>
        <Row $gap={5} $align="flex-end"><Value $w={53}>1.417s</Value><Knob size={32} angle={-90} tone="red" arc={[-135, 132]} label="Time" /></Row>
      </Col>
      <Col $ml={6} $gap={3}>
        <Caption>Brightness</Caption>
        <Row $gap={5} $align="flex-end"><Value $w={39}>47.7</Value><Knob size={32} angle={-4} label="Brightness" /></Row>
      </Col>
      <Col $ml={2} $gap={3} $w={60}>
        <Caption>Dry/Wet</Caption>
        <Knob size={32} angle={-70} label="Dry/Wet" />
      </Col>
      <WetCol>
        <Caption>L</Caption>
        <Row><Power /></Row>
      </WetCol>
      <Col $ml={1} $tall $w={17}><ReverbIn><Jack tone="red" used /></ReverbIn><Wire /><Jack tone="red" out used /></Col>
      <Col $ml={2} $tall $w={12}><ReverbIn><Caption>R</Caption></ReverbIn></Col>
      <Col $tall $w={17}><ReverbIn><Jack tone="red" used /></ReverbIn><Wire /><Jack tone="red" out used /></Col>
    </Module>
  );
}

/* ---------- virtual keyboard ---------- */

const KeyWindow = styled.section`
  position: absolute;
  left: 1259px;
  top: 233px;
  width: 306px;
  border-radius: 6px;
  background: ${C.face};
  box-shadow: 0 4px 12px rgba(0, 0, 0, 0.35), 0 0 2px rgba(0, 0, 0, 0.4);
`;
const KeyTitle = styled.header`
  display: flex;
  align-items: center;
  height: 25px;
  padding-left: 94px;
  border-radius: 6px 6px 0 0;
  background: linear-gradient(#ececec, #d6d6d6);
  font: 18px/24px ${mac};
  color: #5a5a5a;
`;
const Keys = styled.div`
  display: flex;
  height: 49px;
  border: solid #000;
  border-width: 2px 0;
`;
const Key = styled.button<{ $sharp: boolean; $down?: boolean; $w?: number }>`
  position: relative;
  flex: ${(p) => (p.$w ? `0 0 ${p.$w}px` : "1 1 0")};
  min-width: 0;
  border: 0;
  border-right: ${(p) => (p.$w === 8 ? 0 : 1)}px solid #000;
  background: ${(p) => (p.$down ? "#c8c8c8" : "#fff")};
  ${(p) =>
    p.$sharp &&
    css`
      &::after {
        content: "";
        position: absolute;
        z-index: 1;
        right: -6px;
        top: 0;
        width: 11px;
        height: 25px;
        background: #000;
      }
    `}
`;
const KeyButtons = styled.div`
  display: flex;
  gap: 4px;
  padding: 6px 5px 1px;
`;
const sharps = "1011011101101110110111";

function VirtualKeyboard() {
  return (
    <KeyWindow>
      <KeyTitle>
        <Lights $left={9} $gap={9}>
          <Light $c="#ff6159" $edge="#f05850" aria-label="Close" />
          <Light $c="#d0d0d0" $edge="#bcbcbc" aria-label="Minimize" />
          <Light $c="#34c84a" $edge="#2cb040" aria-label="Zoom" />
        </Lights>
        Virtual Keyboard
      </KeyTitle>
      <Keys>
        {sharps.split("").map((s, i) => (
          <Key key={i} $sharp={s === "1"} $w={i === 0 ? 9 : undefined} $down={i === 11} aria-label={`Key ${i + 1}`} />
        ))}
        <Key $sharp={false} $w={8} aria-label="Key 23" />
      </Keys>
      <KeyButtons>
        {["<<", "<", ">", ">>"].map((t) => <Btn key={t} $w={30} $h={21}>{t}</Btn>)}
        <Btn $w={53} $h={21} $ml={9}>Drone</Btn>
        <Btn $w={53} $h={21}>Repeat</Btn>
      </KeyButtons>
    </KeyWindow>
  );
}

/* ---------- toolbar content ---------- */

const tabs: [string, string][] = [
  ["In/Out", "#808080"], ["Osc", "#d82414"], ["Rnd", "#10a0e8"], ["Filter", "#089090"],
  ["Delay", "#9878f8"], ["Level", "#50a818"], ["Switch", "#74dcf8"], ["Seq", "#ffcc50"],
  ["Note", "#9848f8"], ["LFO", "#0830d8"], ["Env", "#08c4c4"], ["FX", "#f080b8"],
  ["Shaper", "#d48484"], ["Mixer", "#ff9050"], ["Logic", "#f4e828"], ["MIDI", "#c88c18"],
];

function DownArrows({ xs, y }: { xs: number[]; y: number }) {
  return <>{xs.map((x) => <path key={x} d={`M${x} ${y}V${y + 4}M${x - 3} ${y + 3}H${x + 3}L${x} ${y + 7}Z`} fill="#000" stroke="#000" />)}</>;
}
const box = { fill: "#a8a8a8", stroke: "#000", strokeWidth: 1.5 };
const bigBox = { y: 1, height: 8, ...box };
const lowBox = { y: 9, height: 8, ...box };
function PianoIcon({ down }: { down?: boolean }) {
  return (
    <>
      <rect x="2" y="2" width="29" height="15" fill={down ? "#a0a0a0" : "#fff"} />
      {down && <rect x="20" y="2" width="4" height="15" fill="#fff" />}
      <path d="M6.500 2V11M11.500 2V11M19 2V11M23.500 2V11M28 2V11" stroke="#000" strokeWidth="2.600" />
    </>
  );
}
const moduleKeys: [string, React.ReactNode][][] = [
  [
    ["2-OUT", <><rect x="6" width="21" {...bigBox} /><DownArrows xs={[12, 22]} y={10} /></>],
    ["4-OUT", <><rect x="3" width="27" {...bigBox} /><DownArrows xs={[6, 13, 20, 27]} y={10} /></>],
  ],
  [
    ["2-IN", <><rect x="6" width="21" {...lowBox} /><DownArrows xs={[12, 22]} y={1} /></>],
    ["4-IN", <><rect x="3" width="27" {...lowBox} /><DownArrows xs={[6, 13, 20, 27]} y={1} /></>],
  ],
  [["FX IN", <><path d="M4 6H29" stroke="#000" strokeWidth="3" /><path d="M11 1V12M22 1V12" stroke="#000" /><DownArrows xs={[11, 22]} y={9} /></>]],
  [
    ["KBD", <PianoIcon />],
    ["MONO", <PianoIcon />],
    ["DEVICE", <><path d="M6 1V6H11V1M8.500 6V15" fill="none" stroke="#000" strokeWidth="1.800" /><path d="M17 15Q18 7 24 7Q30 7 31 15Z" {...box} /></>],
  ],
  [["STAT", <rect x="6" y="2" width="21" height="9" {...box} />]],
  [["N-DET", <PianoIcon down />]],
  [["N-BAR", <><path d="M6 15H28V3" fill="none" stroke="#909090" strokeWidth="2" /><rect x="5" y="2" width="22" height="12" fill="#dcdcdc" /><text x="16" y="12" textAnchor="middle" fontSize="10" fontWeight="700">TXT</text></>]],
];

const MorphLabel = styled(Btn)`
  padding: 0;
  white-space: nowrap;
`;
const CheckColor = styled.input<{ $c: string }>`
  appearance: none;
  display: flex;
  align-items: center;
  justify-content: center;
  width: 20px;
  height: 20px;
  border: 1px solid ${C.line};
  background: ${(p) => p.$c};
  &:checked::after {
    content: "✔";
    font: 17px/17px "DejaVu Sans", sans-serif;
  }
`;
const MiniKey = styled.button`
  width: 21px;
  height: 20px;
  border: 1px solid ${C.line};
  background: ${C.btn};
  font-size: 14px;
`;
const ButtonRun = styled.div<{ $ml?: number }>`
  display: flex;
  margin-left: ${(p) => p.$ml ?? 0}px;
  border: 1px solid ${C.line};
`;
const VarKey = styled.button<{ $on?: boolean }>`
  flex: 1;
  height: 20px;
  border: 0;
  border-right: 1px solid ${C.line};
  background: ${(p) => (p.$on ? C.cyan : C.btn)};
  font-size: 14px;
  &:last-child { border-right: 0; }
`;
const VarRun = styled(ButtonRun)`
  width: 172px;
`;
const ArrowKey = styled.button`
  display: flex;
  align-items: center;
  justify-content: center;
  width: 16px;
  height: 12px;
  border: 1px solid #aaa;
  background: #eee;
`;
const PatchPower = styled.div`
  align-self: flex-end;
  margin: 0 0 2px 5px;
`;

const menus = [["", "F", "ile"], ["", "E", "dit"], ["", "P", "atch"], ["Pe", "r", "formance"], ["", "S", "ynth"], ["Set", "u", "p"], ["", "T", "ools"], ["Window", "", ""], ["", "H", "elp"]];
const loads: [string, number, number][] = [["VA", 54.4, 39.1], ["FX", 31.3, 25.2]];
const morphs = ["Wheel", "Vel", "Keyb", "Aft.Tch", "Sust.Pd", "Ctrl.Pd", "P.Stick", "G.Wh 2"];
const cableColors: [string, string][] = [["Red", "#ff7070"], ["Blue", "#7c84ff"], ["Yellow", "#e8e468"], ["Orange", "#ffc868"], ["Green", "#60d468"], ["Purple", "#d440e8"], ["White", "#ffffff"]];

const vaCables: { tone: "red" | "blue"; pts: Pt[] }[] = [
  { tone: "blue", pts: [[642, 121], [647, 137], [646, 146], [643, 167], [641, 190], [637, 210], [641, 237], [644, 262], [648, 302], [642, 327], [646, 349], [640, 370], [641, 395], [640, 439], [642, 464], [646, 489], [641, 512], [642, 533], [646, 557], [640, 575], [640, 596], [642, 602]] },
  { tone: "blue", pts: [[642, 121], [700, 100], [770, 75], [813, 61], [887, 39], [937, 25], [1003, 12], [1053, 6], [1077, 5], [1103, 6], [1140, 14], [1158, 23]] },
  { tone: "red", pts: [[766, 121], [782, 149], [795, 185], [802, 225], [807, 259], [809, 293]] },
  { tone: "red", pts: [[766, 190], [783, 204], [795, 219], [807, 239], [823, 265], [837, 285], [853, 293]] },
  { tone: "red", pts: [[766, 259], [810, 264], [860, 274], [883, 282], [898, 293]] },
  { tone: "red", pts: [[766, 327], [780, 315], [803, 310], [850, 311], [890, 312], [920, 309], [933, 304], [942, 293]] },
  { tone: "red", pts: [[766, 396], [780, 377], [797, 366], [820, 359], [857, 349], [913, 335], [960, 319], [980, 307], [987, 293]] },
  { tone: "red", pts: [[766, 465], [803, 424], [850, 387], [903, 355], [953, 327], [1000, 304], [1030, 293]] },
  { tone: "red", pts: [[766, 536], [787, 534], [820, 520], [870, 490], [920, 454], [970, 405], [1003, 372], [1037, 337], [1063, 307], [1075, 293]] },
  { tone: "red", pts: [[766, 603], [787, 597], [852, 562], [893, 530], [947, 487], [987, 449], [1030, 405], [1070, 359], [1097, 324], [1119, 293]] },
  { tone: "red", pts: [[766, 669], [792, 645], [829, 629], [893, 613], [988, 597], [1052, 584], [1100, 566], [1137, 552], [1158, 536]] },
  { tone: "red", pts: [[727, 669], [746, 668], [766, 669]] },
  { tone: "red", pts: [[1158, 444], [1155, 460], [1158, 472]] },
];
const fxCables: Pt[][] = [
  [[727, 28], [731, 42], [736, 60]],
  [[767, 28], [767, 45], [766, 60]],
  [[736, 100], [732, 122], [727, 142]],
  [[767, 100], [767, 120], [766, 142]],
];

export default function App() {
  return (
    <AppWindow>
      <Global />
      <TitleBar>
        <Lights $left={12} $gap={13}>
          {["Close", "Minimize", "Zoom"].map((l) => <Light key={l} $c="#dddddd" $edge="#cfcfcf" aria-label={l} />)}
        </Lights>
        <AppTitle>Nord Virtual Modular - [SlowOrgan in Slot A on Init Synth]</AppTitle>
      </TitleBar>
      <MenuBar>
        <svg width="20" height="24" aria-hidden="true">
          <path d="M1 1H14L19 6V23H1Z" fill="#fff" stroke="#555" strokeWidth="1.500" />
          <path d="M14 1V6H19" fill="none" stroke="#555" />
          <text x="10" y="16" textAnchor="middle" fontSize="11" fontWeight="700">G2</text>
        </svg>
        {menus.map((m) => <MenuItem key={m.join("")}>{m[0]}<u>{m[1]}</u>{m[2]}</MenuItem>)}
        <WinControls>
          <WinButton aria-label="Minimize window"><svg width="15" height="15"><path d="M1 13H12" stroke="#000" strokeWidth="3" /></svg></WinButton>
          <WinButton aria-label="Restore window"><svg width="15" height="15" fill="none" stroke="#000" strokeWidth="1.500"><path d="M5 6V2H13V9H10M5 3H13M1 7H9V13H1ZM1 8H9" /></svg></WinButton>
          <WinButton aria-label="Close window"><svg width="15" height="15"><path d="M3 2L12 12M12 2L3 12" stroke="#000" strokeWidth="3" /></svg></WinButton>
        </WinControls>
      </MenuBar>

      <Toolbar $h={38}>
        <StackLabel $w={40} $ml={7}>CPU<br />Load</StackLabel>
        <Meter $w={153} $h={22} $bar={3}>19.2%<MeterBar $h={3}><MeterFill style={{ width: "18%" }} /></MeterBar></Meter>
        <StackLabel $w={49} $ml={13}>Master<br />Clock</StackLabel>
        <Field $w={45}>120</Field>
        <Spin ml={4} label="Master clock" />
        <Btn $w={36} $ml={4} $on>Run</Btn>
        <Slot><SlotKey>A</SlotKey></Slot>
        <Field $w={137} $ml={84}>Init Synth</Field>
      </Toolbar>

      <PaletteBar $h={106}>
        <SideKeys>
          <Btn $w={37} $h={21}>New</Btn>
          <Btn $w={37} $h={21}>Init 1</Btn>
          <Btn $w={37} $h={21}>Init 2</Btn>
        </SideKeys>
        <Palette>
          <Tabs>{tabs.map(([t, c], i) => <Tab key={t} $c={c} $on={i === 0}>{t}</Tab>)}</Tabs>
          <ModuleKeys>
            {moduleKeys.map((g, i) => (
              <KeyGroup key={i}>
                {g.map(([t, art]) => (
                  <ModuleKey key={t} $on={t === "2-OUT"}>{t}<svg width="33" height="19">{art}</svg></ModuleKey>
                ))}
              </KeyGroup>
            ))}
          </ModuleKeys>
        </Palette>
        <ToolColumn $ml={22}>
          Undo/Redo
          <UndoRow>
            <Btn $w={35} $h={25} aria-label="Undo"><svg width="20" height="16" fill="none" stroke="#9a9a9a" strokeWidth="2"><path d="M2 2V10H9M3 9C7 1 18 2 17 9Q17 13 13 15" /></svg></Btn>
            <Btn $w={35} $h={25} aria-label="Redo"><svg width="20" height="16" fill="none" stroke="#9a9a9a" strokeWidth="2"><path d="M18 2V10H11M17 9C13 1 2 2 3 9Q3 13 7 15" /></svg></Btn>
          </UndoRow>
          Module Color
          <ColorRow>
            <Btn $w={40} $h={24} aria-label="Module color">
              <svg width="22" height="19"><path d="M2 11L10 3L16 10L9 17Z" fill="#fff" stroke="#000" strokeWidth="1.300" /><path d="M5 12H14L9 17Z" fill="#aaa" /><path d="M7 9V3Q9 0 11 3V9" fill="none" stroke="#1030b0" strokeWidth="1.500" /><path d="M12 5Q20 5 20 15L17 14Q17 9 13 8Z" fill="#1030b0" /></svg>
            </Btn>
            <Btn $w={14} $h={24} $ml={-2} aria-label="Choose module color"><Arrow dir="down" /></Btn>
          </ColorRow>
        </ToolColumn>
        <ToolColumn $ml={12}>
          <Caption $ml={26}>Patch Load</Caption>
          <LoadGrid>
            <span /><LoadHead>Cycles</LoadHead><LoadHead>Memory</LoadHead>
            {loads.map(([n, a, b]) => (
              <React.Fragment key={n}>
                <span>{n}</span>
                {[a, b].map((v) => (
                  <Meter key={v} $w={53} $h={25} $bar={6}>{v}<MeterBar $h={6}><MeterFill style={{ width: `${v}%` }} /></MeterBar></Meter>
                ))}
              </React.Fragment>
            ))}
          </LoadGrid>
        </ToolColumn>
        <ToolColumn $ml={32}>
          Morph Groups
          <Morphs>
            {morphs.map((m, i) => (
              <div key={m}>
                <Morph $on={i === 0}>
                  Group {i + 1}
                  <Knob size={30} angle={-145} tone={i === 0 ? "red" : "blue"} label={`Morph group ${i + 1}`} />
                  {i === 0 && (
                    <MorphArrows>
                      <ArrowKey aria-label="Previous source"><Arrow dir="down" /></ArrowKey>
                      <ArrowKey aria-label="Next source"><Arrow dir="up" /></ArrowKey>
                    </MorphArrows>
                  )}
                </Morph>
                <MorphLabel $w={58} $h={18} $light>{m}</MorphLabel>
              </div>
            ))}
          </Morphs>
        </ToolColumn>
      </PaletteBar>

      <Toolbar $h={38}>
        <StackLabel $w={42} $ml={5}>Patch<br />Name</StackLabel>
        <TextField $w={153} defaultValue="SlowOrgan" aria-label="Patch name" />
        <SelectBox $ml={3}>
          <DarkSelect aria-label="Patch category" defaultValue="Organ"><option>Organ</option><option>Pad</option><option>Lead</option></DarkSelect>
          <DropMark><Arrow dir="down" /></DropMark>
        </SelectBox>
        <StackLabel $w={39} $ml={13}>Voice<br />Mode</StackLabel>
        <Field $w={61}>1 (8)</Field>
        <Spin ml={3} label="Voice mode" />
        <StackLabel $w={58} $ml={12}>Variation</StackLabel>
        <VarRun>{[1, 2, 3, 4, 5, 6, 7, 8].map((n) => <VarKey key={n} $on={n === 8}>{n}</VarKey>)}</VarRun>
        <Btn $w={38} $ml={8}>Init</Btn>
        <StackLabel $w={40} $ml={16}>Patch<br />Level</StackLabel>
        <Knob size={30} angle={76} label="Patch level" />
        <PatchPower><Power /></PatchPower>
        <StackLabel $w={48} $ml={17}>Visible<br />Cables</StackLabel>
        <ButtonRun>
          {cableColors.map(([n, c]) => <CheckColor key={n} type="checkbox" defaultChecked $c={c} aria-label={`${n} cables`} />)}
          <MiniKey>H</MiniKey>
          <MiniKey>S</MiniKey>
        </ButtonRun>
      </Toolbar>

      <Pane $grow={707} $bg="#ababb8">
        <StoneTexture id="stone-va" tint="#c7c7d6" seed={4} />
        <PaneName $c="#909090" $x={7}>VA</PaneName>
        {oscs.map((o, i) => <OscNoise key={i} osc={o} y={Math.round(68 + 68.75 * i)} />)}
        <Constant />
        <MixFader />
        <EnvADSR />
        <InOut name="2-Out1" y={641} pad="0dB" groups={["Out", "Fx", "Bus"]} on={2} />
        <Cables aria-hidden="true">{vaCables.map((c, i) => <Cable key={i} {...c} />)}</Cables>
      </Pane>

      <Splitter>
        <SplitKey aria-label="Expand voice area"><svg width="13" height="11"><path d="M0 11L6.500 0L13 11Z" /></svg></SplitKey>
        <SplitKey aria-label="Expand effects area"><svg width="13" height="11"><path d="M0 0L6.500 11L13 0Z" /></svg></SplitKey>
        <SplitKey aria-label="Centre splitter"><svg width="13" height="11"><path d="M1 0H12V2L8 4V7L12 9V11H1V9L5 7V4L1 2Z" /></svg></SplitKey>
      </Splitter>

      <Pane $grow={507} $bg="#d6d6d4">
        <StoneTexture id="stone-fx" tint="#fafaf8" seed={11} />
        <PaneName $c="#b0b0b0" $x={17}>FX</PaneName>
        <InOut name="Fx-In1" y={-1} pad="-6dB" groups={["Fx"]} on={0} out />
        <Reverb />
        <InOut name="2-Out1" y={114} pad="0dB" groups={["Out", "Fx", "Bus"]} on={0} />
        <Cables aria-hidden="true">{fxCables.map((pts, i) => <Cable key={i} tone="red" pts={pts} />)}</Cables>
        <VirtualKeyboard />
      </Pane>
    </AppWindow>
  );
}
